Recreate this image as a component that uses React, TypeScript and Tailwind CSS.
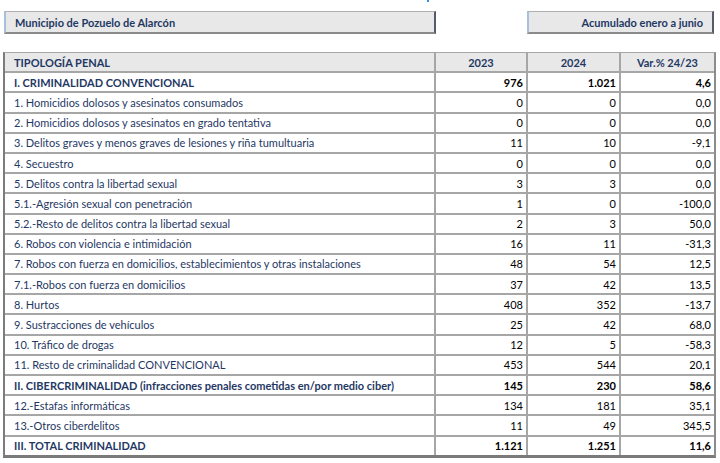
import React from "react";

type Row = { label: string; a: string; b: string; c: string; bold?: boolean };

const rows: Row[] = [
  { label: "I. CRIMINALIDAD CONVENCIONAL", a: "976", b: "1.021", c: "4,6", bold: true },
  { label: "1. Homicidios dolosos y asesinatos consumados", a: "0", b: "0", c: "0,0" },
  { label: "2. Homicidios dolosos y asesinatos en grado tentativa", a: "0", b: "0", c: "0,0" },
  { label: "3. Delitos graves y menos graves de lesiones y riña tumultuaria", a: "11", b: "10", c: "-9,1" },
  { label: "4. Secuestro", a: "0", b: "0", c: "0,0" },
  { label: "5. Delitos contra la libertad sexual", a: "3", b: "3", c: "0,0" },
  { label: "5.1.-Agresión sexual con penetración", a: "1", b: "0", c: "-100,0" },
  { label: "5.2.-Resto de delitos contra la libertad sexual", a: "2", b: "3", c: "50,0" },
  { label: "6. Robos con violencia e intimidación", a: "16", b: "11", c: "-31,3" },
  { label: "7. Robos con fuerza en domicilios, establecimientos y otras instalaciones", a: "48", b: "54", c: "12,5" },
  { label: "7.1.-Robos con fuerza en domicilios", a: "37", b: "42", c: "13,5" },
  { label: "8. Hurtos", a: "408", b: "352", c: "-13,7" },
  { label: "9. Sustracciones de vehículos", a: "25", b: "42", c: "68,0" },
  { label: "10. Tráfico de drogas", a: "12", b: "5", c: "-58,3" },
  { label: "11. Resto de criminalidad CONVENCIONAL", a: "453", b: "544", c: "20,1" },
  { label: "II. CIBERCRIMINALIDAD (infracciones penales cometidas en/por medio ciber)", a: "145", b: "230", c: "58,6", bold: true },
  { label: "12.-Estafas informáticas", a: "134", b: "181", c: "35,1" },
  { label: "13.-Otros ciberdelitos", a: "11", b: "49", c: "345,5" },
  { label: "III. TOTAL CRIMINALIDAD", a: "1.121", b: "1.251", c: "11,6", bold: true },
];

const font = { fontFamily: "Lato, 'Liberation Sans', sans-serif" };

export default function App() {
  return (
    <div className="relative w-[720px] h-[463px] bg-white overflow-hidden text-[11px] leading-none" style={font}>
      <span className="absolute left-[427px] top-0 w-[2px] h-[2px] bg-[#2f8fe0]" />
      <div className="flex pt-[11px] pl-[4px]">
        <div className="w-[432px] h-[23px] bg-[#e8e8e8] border-l-[2px] border-l-[#a9c0dc] border-t border-t-[#b0b0b0] border-r-[2px] border-r-[#555b6a] border-b-[2px] border-b-[#8a8a8a] flex items-center pl-[9px] font-bold text-[#1f3864]">
          Municipio de Pozuelo de Alarcón
        </div>
        <div className="ml-[91px] w-[187px] h-[23px] bg-[#e8e8e8] border-l-[2px] border-l-[#a9c0dc] border-t border-t-[#b0b0b0] border-r-[2px] border-r-[#555b6a] border-b-[2px] border-b-[#8a8a8a] flex items-center justify-end pr-[9px] font-bold text-[#1f3864]">
          Acumulado enero a junio
        </div>
      </div>
      <div className="ml-[3px] mt-[18px] w-[713px] border-l-[2px] border-l-[#7c7c7c] border-r-[2px] border-r-[#8c8c8c] border-t border-t-[#a6a6a6] border-b-[3px] border-b-[#7a7a7a]">
        <div className="grid grid-cols-[431px_92px_93px_93px] h-[20.2px] bg-[#e8e8e8] font-bold text-[#1f3864]">
          <div className="flex items-center pl-[9px] border-r-[2px] border-r-[#a6a6a6] border-b-[2px] border-b-[#a6a6a6]">TIPOLOGÍA PENAL</div>
          <div className="flex items-center justify-center border-r-[2px] border-r-[#a6a6a6] border-b-[2px] border-b-[#a6a6a6]">2023</div>
          <div className="flex items-center justify-center border-r-[2px] border-r-[#a6a6a6] border-b-[2px] border-b-[#a6a6a6]">2024</div>
          <div className="flex items-center justify-center border-b-[2px] border-b-[#a6a6a6]">Var.% 24/23</div>
        </div>
        {rows.map((r, i) => {
          const last = i === rows.length - 1;
          const bb = last ? "" : "border-b-[2px] border-b-[#a6a6a6]";
          return (
            <div key={i} className={`grid grid-cols-[431px_92px_93px_93px] ${last ? "h-[18.2px]" : "h-[20.2px]"} ${r.bold ? "font-bold" : ""}`}>
              <div className={`flex items-center pl-[9px] text-[#1f3864] whitespace-nowrap border-r-[2px] border-r-[#a6a6a6] ${bb}`}>{r.label}</div>
              <div className={`flex items-center justify-end pr-[3px] text-black border-r-[2px] border-r-[#a6a6a6] ${bb}`}>{r.a}</div>
              <div className={`flex items-center justify-end pr-[3px] text-black border-r-[2px] border-r-[#a6a6a6] ${bb}`}>{r.b}</div>
              <div className={`flex items-center justify-end pr-[3px] text-black ${bb}`}>{r.c}</div>
            </div>
          );
        })}
      </div>
    </div>
  );
}
